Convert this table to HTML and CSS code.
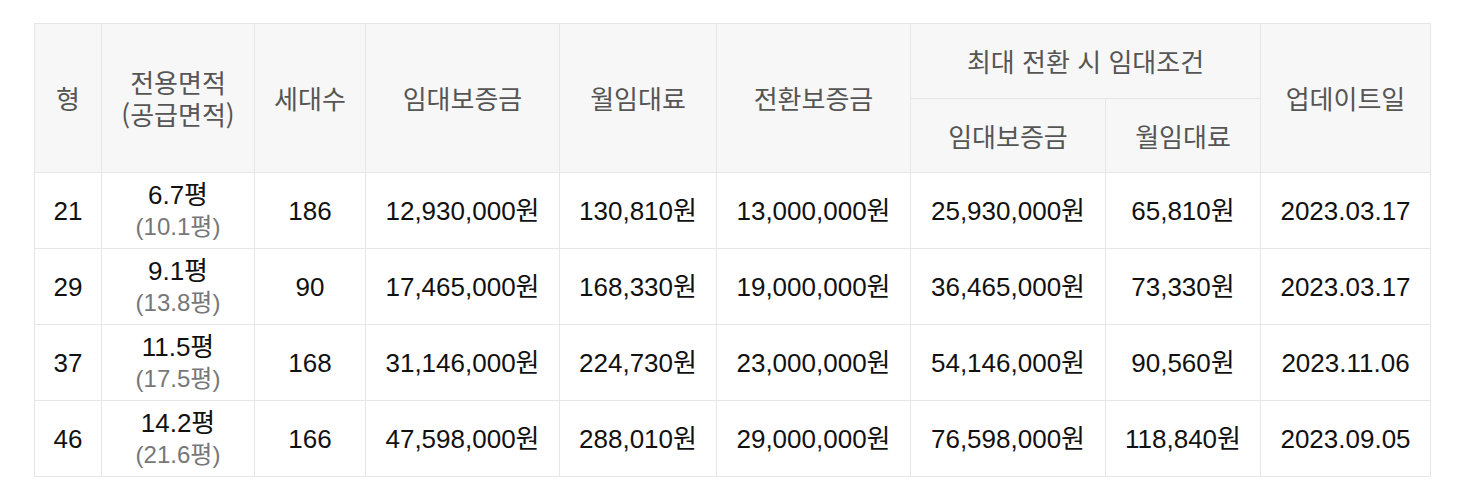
FILE: index.html
```html
<!DOCTYPE html>
<html lang="ko">
<head>
<meta charset="utf-8">
<link rel="stylesheet" href="styles.css">
</head>
<body>
<div class="wrap">
<table class="rent">
  <colgroup>
    <col class="c1"><col class="c2"><col class="c3"><col class="c4"><col class="c5"><col class="c6"><col class="c7"><col class="c8"><col class="c9">
  </colgroup>
  <thead>
    <tr class="h1">
      <th rowspan="2">형</th>
      <th rowspan="2">전용면적<br>(공급면적)</th>
      <th rowspan="2">세대수</th>
      <th rowspan="2">임대보증금</th>
      <th rowspan="2">월임대료</th>
      <th rowspan="2">전환보증금</th>
      <th colspan="2">최대 전환 시 임대조건</th>
      <th rowspan="2">업데이트일</th>
    </tr>
    <tr class="h2">
      <th>임대보증금</th>
      <th>월임대료</th>
    </tr>
  </thead>
  <tbody>
    <tr>
      <td>21</td>
      <td><span class="area">6.7평</span><span class="sub">(10.1평)</span></td>
      <td>186</td>
      <td>12,930,000원</td>
      <td>130,810원</td>
      <td>13,000,000원</td>
      <td>25,930,000원</td>
      <td>65,810원</td>
      <td>2023.03.17</td>
    </tr>
    <tr>
      <td>29</td>
      <td><span class="area">9.1평</span><span class="sub">(13.8평)</span></td>
      <td>90</td>
      <td>17,465,000원</td>
      <td>168,330원</td>
      <td>19,000,000원</td>
      <td>36,465,000원</td>
      <td>73,330원</td>
      <td>2023.03.17</td>
    </tr>
    <tr>
      <td>37</td>
      <td><span class="area">11.5평</span><span class="sub">(17.5평)</span></td>
      <td>168</td>
      <td>31,146,000원</td>
      <td>224,730원</td>
      <td>23,000,000원</td>
      <td>54,146,000원</td>
      <td>90,560원</td>
      <td>2023.11.06</td>
    </tr>
    <tr>
      <td>46</td>
      <td><span class="area">14.2평</span><span class="sub">(21.6평)</span></td>
      <td>166</td>
      <td>47,598,000원</td>
      <td>288,010원</td>
      <td>29,000,000원</td>
      <td>76,598,000원</td>
      <td>118,840원</td>
      <td>2023.09.05</td>
    </tr>
  </tbody>
</table>
</div>
</body>
</html>
```

FILE: styles.css
```css
html, body {
  margin: 0;
  padding: 0;
  background: #ffffff;
}

.wrap {
  padding: 23px 0 0 34px;
}

.rent {
  border-collapse: collapse;
  table-layout: fixed;
  width: 1396px;
  border-top: 1px solid #d6d6d6;
  font-family: "Liberation Sans", "Noto Sans CJK KR", sans-serif;
}

.c1 { width: 67px; }
.c2 { width: 153px; }
.c3 { width: 111px; }
.c4 { width: 194px; }
.c5 { width: 157px; }
.c6 { width: 194px; }
.c7 { width: 195px; }
.c8 { width: 155px; }
.c9 { width: 170px; }

.rent th,
.rent td {
  border: 1px solid #e6e6e6;
  text-align: center;
  vertical-align: middle;
  padding: 0;
}

.rent th {
  background: #f7f7f7;
  color: #555555;
  font-family: "Noto Sans CJK KR", sans-serif;
  font-weight: 400;
  font-size: 26px;
  line-height: 32px;
}

.rent tr.h1 { height: 75px; }
.rent tr.h2 { height: 74px; }

.rent tbody tr { height: 76px; }

.rent td {
  color: #111111;
  font-size: 26px;
  line-height: 32px;
}

.area,
.sub {
  display: block;
}

.sub {
  color: #777777;
  font-size: 24px;
  line-height: 32px;
}
```
